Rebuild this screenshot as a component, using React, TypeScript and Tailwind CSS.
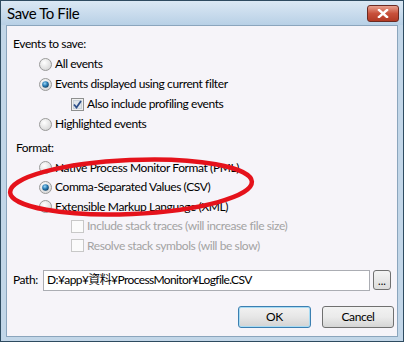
import React from 'react';

const font = { fontFamily: 'Lato, "Noto Sans CJK JP", sans-serif' };

const Radio: React.FC<{ checked?: boolean }> = ({ checked }) => (
  <svg width="13" height="13" viewBox="0 0 13 13" className="shrink-0">
    <defs>
      <radialGradient id="rbg" cx="0.4" cy="0.35" r="0.7">
        <stop offset="0" stopColor="#ffffff" />
        <stop offset="1" stopColor="#d4d4d4" />
      </radialGradient>
      <radialGradient id="rdot" cx="0.4" cy="0.35" r="0.7">
        <stop offset="0" stopColor="#9fd7f5" />
        <stop offset="0.5" stopColor="#2a7fb8" />
        <stop offset="1" stopColor="#0d3a5c" />
      </radialGradient>
    </defs>
    <circle cx="6.5" cy="6.5" r="6" fill="url(#rbg)" stroke="#9a9a9a" strokeWidth="1" />
    {checked && <circle cx="6.5" cy="6.5" r="3.3" fill="url(#rdot)" />}
  </svg>
);

const Check: React.FC<{ checked?: boolean; disabled?: boolean }> = ({ checked, disabled }) => (
  <svg width="13" height="13" viewBox="0 0 13 13" className="shrink-0">
    <rect x="0.5" y="0.5" width="12" height="12" fill={disabled ? '#fbfbfb' : '#f0f0f0'} stroke={disabled ? '#c8c8c8' : '#8e8f8f'} />
    {!disabled && <rect x="2.5" y="2.5" width="8" height="8" fill="#dfe5ea" stroke="#c9d2da" />}
    {checked && <path d="M3 6.5 L5.5 9.5 L10 3" fill="none" stroke="#2d4f8a" strokeWidth="1.8" />}
  </svg>
);

export default function App() {
  return (
    <div className="w-[404px] h-[342px] flex flex-col border border-[#2e4b60] bg-[#c2d6e8] text-black text-[12px] tracking-[-0.4px]" style={font}>
      {/* title bar */}
      <div className="h-[24px] shrink-0 flex items-center justify-between pl-[6px] pr-[4px] bg-gradient-to-b from-[#dbe8f4] to-[#b8d0e6]">
        <span className="text-[15px] text-black leading-none">Save To File</span>
        <div className="w-[32px] h-[17px] rounded-[3px] border border-[#6b2a22] bg-gradient-to-b from-[#e8a08e] via-[#c8513b] to-[#b23a24] flex items-center justify-center">
          <svg width="12" height="9" viewBox="0 0 12 9">
            <path d="M2 1 L10 8 M10 1 L2 8" stroke="#ffffff" strokeWidth="2.4" strokeLinecap="square" />
          </svg>
        </div>
      </div>

      {/* client */}
      <div className="relative flex-1 mx-[5px] mb-[4px] border border-[#8ba5bd] bg-[#f6f4f9] flex flex-col pt-[8px]">
        <div className="h-[20px] flex items-center pl-[6px]">Events to save:</div>
        <div className="pl-[32px] flex flex-col">
          <div className="h-[20px] flex items-center gap-[2px]"><Radio /><span className="ml-[1px]">All events</span></div>
          <div className="h-[20px] flex items-center gap-[2px]"><Radio checked /><span className="ml-[1px]">Events displayed using current filter</span></div>
          <div className="h-[20px] flex items-center gap-[2px] pl-[32px]"><Check checked /><span className="ml-[1px]">Also include profiling events</span></div>
          <div className="h-[20px] flex items-center gap-[2px]"><Radio /><span className="ml-[1px]">Highlighted events</span></div>
        </div>
        <div className="h-[20px] mt-[4px] flex items-center pl-[9px]">Format:</div>
        <div className="pl-[32px] flex flex-col">
          <div className="h-[19.5px] flex items-center gap-[2px]"><Radio /><span className="ml-[1px]">Native Process Monitor Format (PML)</span></div>
          <div className="h-[19.5px] flex items-center gap-[2px]"><Radio checked /><span className="ml-[1px]">Comma-Separated Values (CSV)</span></div>
          <div className="h-[19.5px] flex items-center gap-[2px]"><Radio /><span className="ml-[1px]">Extensible Markup Language (XML)</span></div>
          <div className="h-[19.5px] flex items-center gap-[2px] pl-[32px] text-[#a3a3a3]"><Check disabled /><span className="ml-[1px]">Include stack traces (will increase file size)</span></div>
          <div className="h-[19.5px] flex items-center gap-[2px] pl-[32px] text-[#a3a3a3]"><Check disabled /><span className="ml-[1px]">Resolve stack symbols (will be slow)</span></div>
        </div>

        <div className="mt-[14px] flex items-center pl-[6px] pr-[5px]">
          <span className="w-[30px]">Path:</span>
          <div className="w-[327px] h-[21px] border border-[#abadb3] bg-white flex items-center pl-[3px] tracking-[-0.6px]">D:¥app¥資料¥ProcessMonitor¥Logfile.CSV</div>
          <div className="ml-[3px] w-[18px] h-[20px] rounded-[3px] border border-[#707070] bg-gradient-to-b from-[#f4f4f4] to-[#dcdcdc] flex items-end justify-center pb-[3px] text-[11px] leading-none tracking-normal">...</div>
        </div>

        <div className="mt-[15px] flex justify-end gap-[11px] pr-[3px]">
          <button className="w-[73px] h-[22px] rounded-[3px] border border-[#3c7fb1] bg-gradient-to-b from-[#f2f2f2] via-[#e6e6e6] to-[#d3d3d3] shadow-[inset_0_0_0_1px_#a8dbf3] text-[12px]">OK</button>
          <button className="w-[72px] h-[22px] rounded-[3px] border border-[#707070] bg-gradient-to-b from-[#f2f2f2] via-[#ebebeb] to-[#d5d5d5] text-[12px]">Cancel</button>
        </div>

        {/* hand-drawn red ellipse annotation */}
        <svg className="absolute left-[-6px] top-[-26px] pointer-events-none" width="404" height="342" viewBox="0 0 404 342">
          <ellipse cx="130" cy="187" rx="121" ry="27" transform="rotate(-2.5 130 187)" fill="none" stroke="#e5121b" strokeWidth="4.5" />
        </svg>
      </div>
    </div>
  );
}
